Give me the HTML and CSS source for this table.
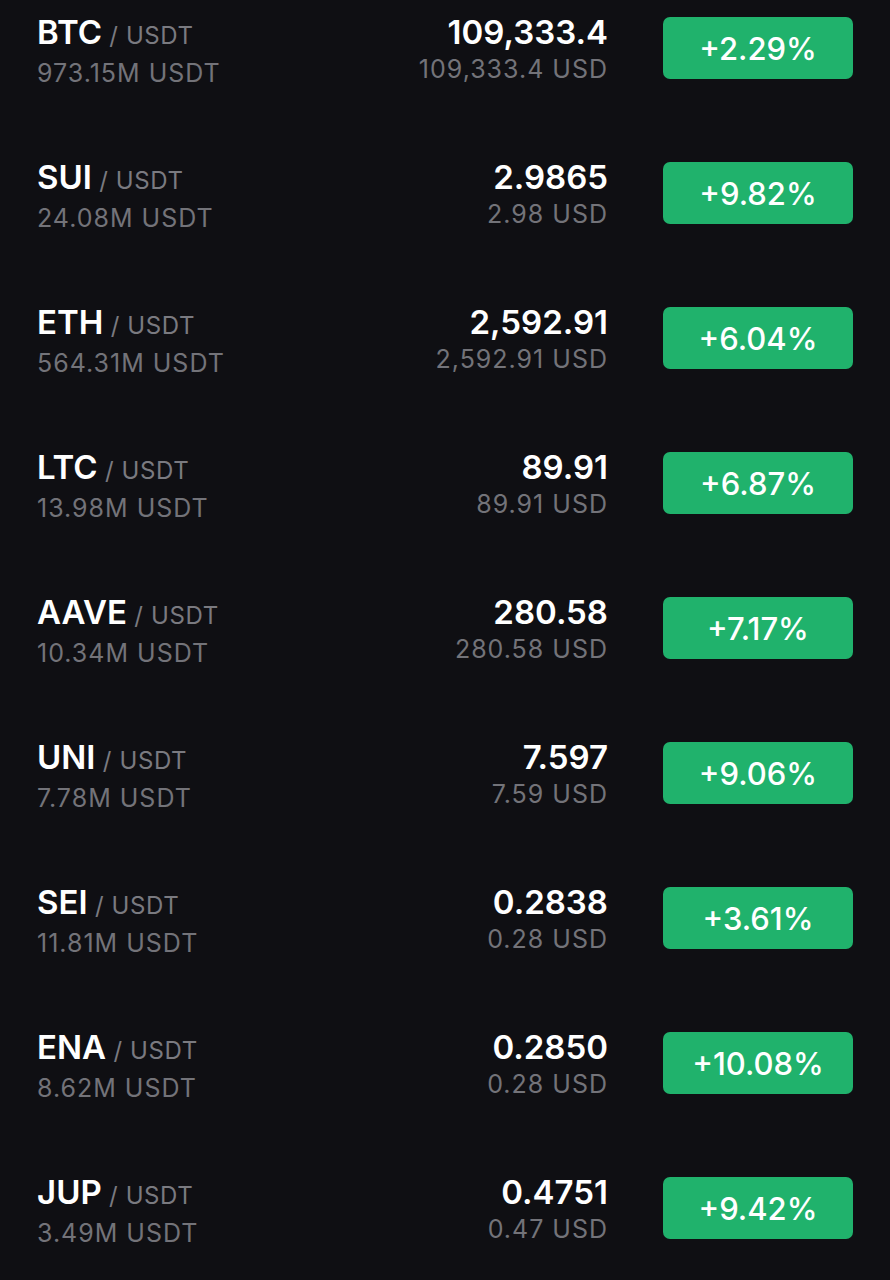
FILE: index.html
```html
<!DOCTYPE html>
<html>
<head>
<meta charset="utf-8">
<link rel="stylesheet" href="styles.css">
</head>
<body>
<div class="list">
  <div class="row">
    <div class="pair"><div class="sym">BTC<span class="quote"> / USDT</span></div><div class="vol">973.15M USDT</div></div>
    <div class="price"><div class="last">109,333.4</div><div class="fiat">109,333.4 USD</div></div>
    <div class="chg">+2.29%</div>
  </div>
  <div class="row">
    <div class="pair"><div class="sym">SUI<span class="quote"> / USDT</span></div><div class="vol">24.08M USDT</div></div>
    <div class="price"><div class="last">2.9865</div><div class="fiat">2.98 USD</div></div>
    <div class="chg">+9.82%</div>
  </div>
  <div class="row">
    <div class="pair"><div class="sym">ETH<span class="quote"> / USDT</span></div><div class="vol">564.31M USDT</div></div>
    <div class="price"><div class="last">2,592.91</div><div class="fiat">2,592.91 USD</div></div>
    <div class="chg">+6.04%</div>
  </div>
  <div class="row">
    <div class="pair"><div class="sym">LTC<span class="quote"> / USDT</span></div><div class="vol">13.98M USDT</div></div>
    <div class="price"><div class="last">89.91</div><div class="fiat">89.91 USD</div></div>
    <div class="chg">+6.87%</div>
  </div>
  <div class="row">
    <div class="pair"><div class="sym">AAVE<span class="quote"> / USDT</span></div><div class="vol">10.34M USDT</div></div>
    <div class="price"><div class="last">280.58</div><div class="fiat">280.58 USD</div></div>
    <div class="chg">+7.17%</div>
  </div>
  <div class="row">
    <div class="pair"><div class="sym">UNI<span class="quote"> / USDT</span></div><div class="vol">7.78M USDT</div></div>
    <div class="price"><div class="last">7.597</div><div class="fiat">7.59 USD</div></div>
    <div class="chg">+9.06%</div>
  </div>
  <div class="row">
    <div class="pair"><div class="sym">SEI<span class="quote"> / USDT</span></div><div class="vol">11.81M USDT</div></div>
    <div class="price"><div class="last">0.2838</div><div class="fiat">0.28 USD</div></div>
    <div class="chg">+3.61%</div>
  </div>
  <div class="row">
    <div class="pair"><div class="sym">ENA<span class="quote"> / USDT</span></div><div class="vol">8.62M USDT</div></div>
    <div class="price"><div class="last">0.2850</div><div class="fiat">0.28 USD</div></div>
    <div class="chg">+10.08%</div>
  </div>
  <div class="row">
    <div class="pair"><div class="sym">JUP<span class="quote"> / USDT</span></div><div class="vol">3.49M USDT</div></div>
    <div class="price"><div class="last">0.4751</div><div class="fiat">0.47 USD</div></div>
    <div class="chg">+9.42%</div>
  </div>
</div>
</body>
</html>
```

FILE: styles.css
```css
html, body {
  margin: 0;
  padding: 0;
  background: #0f0f13;
  height: 1280px;
  overflow: hidden;
}
body {
  font-family: Inter, "Noto Sans", "Liberation Sans", sans-serif;
  color: #ffffff;
}
.list {
  padding: 17px 37px 0 37px;
}
.row {
  display: grid;
  grid-template-columns: 1fr auto 190px;
  column-gap: 55px;
  align-items: start;
  height: 145px;
}
.pair, .price {
  display: flex;
  flex-direction: column;
}
.price {
  align-items: flex-end;
}
.sym {
  font-size: 33px;
  font-weight: 600;
  line-height: 30px;
}
.quote {
  font-size: 24px;
  font-weight: 400;
  letter-spacing: 0.6px;
  color: #7a7a80;
}
.vol, .fiat {
  font-size: 25px;
  line-height: 36px;
  letter-spacing: 1px;
  color: #737379;
  margin-top: 4px;
}
.last {
  font-size: 33px;
  font-weight: 600;
  line-height: 30px;
}
.chg {
  background: #20b26c;
  border-radius: 7px;
  height: 62px;
  display: flex;
  align-items: center;
  justify-content: center;
  font-size: 31px;
  font-weight: 500;
  color: #ffffff;
}
```
